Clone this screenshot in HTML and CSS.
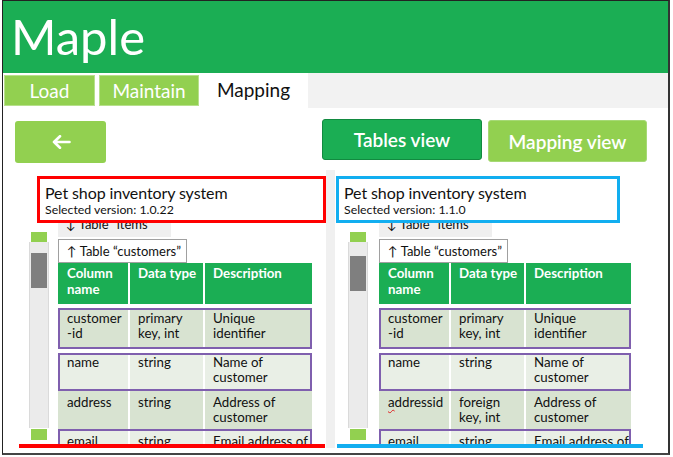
FILE: index.html
```html
<!DOCTYPE html>
<html lang="en">
<head>
<meta charset="utf-8">
<title>Maple</title>
<link rel="stylesheet" href="styles.css">
</head>
<body>
<div class="frame">
  <header class="header"><h1 class="logo">Maple</h1></header>
  <nav class="tabbar">
    <div class="tabgroup">
      <div class="tab tab-green tab-load">Load</div>
      <div class="tab tab-green tab-maintain">Maintain</div>
      <div class="tab tab-active">Mapping</div>
    </div>
  </nav>
  <main class="content">
    <div class="toolbar">
      <button class="btn btn-back" aria-label="Back">
        <svg width="20" height="14" viewBox="0 0 20 14"><path d="M18.5 7H3M9 1.2L3 7l6 5.8" fill="none" stroke="#fff" stroke-width="2.6" stroke-linecap="round" stroke-linejoin="round"/></svg>
      </button>
      <button class="btn btn-tables">Tables view</button>
      <button class="btn btn-mapping">Mapping view</button>
    </div>
    <div class="panels">
      <section class="panel panel-left">
        <div class="title-box title-red">
          <div class="title">Pet shop inventory system</div>
          <div class="version">Selected version: 1.0.22</div>
        </div>
        <div class="body">
          <div class="scrollbar">
            <div class="sb-btn"></div>
            <div class="sb-track"><div class="sb-thumb"></div></div>
            <div class="sb-btn sb-down"></div>
          </div>
          <div class="viewport">
            <div class="scrolled">
              <div class="tbl-label tbl-items">↓ Table “items”</div>
              <div class="tbl-label tbl-current">↑ Table “customers”</div>
              <div class="grid grid-left head">
                <div class="cell">Column<br>name</div>
                <div class="cell">Data type</div>
                <div class="cell">Description</div>
              </div>
              <div class="grid grid-left row dark sel r1">
                <div class="cell">customer<br>-id</div>
                <div class="cell">primary<br>key, int</div>
                <div class="cell">Unique<br>identifier</div>
              </div>
              <div class="grid grid-left row light sel r2">
                <div class="cell">name</div>
                <div class="cell">string</div>
                <div class="cell">Name of<br>customer</div>
              </div>
              <div class="grid grid-left row dark r3">
                <div class="cell">address</div>
                <div class="cell">string</div>
                <div class="cell">Address of<br>customer</div>
              </div>
              <div class="grid grid-left row light sel r4">
                <div class="cell">email</div>
                <div class="cell">string</div>
                <div class="cell nowrap">Email address of</div>
              </div>
            </div>
          </div>
        </div>
        <div class="bottom-line line-red"></div>
      </section>
      <div class="divider"></div>
      <section class="panel panel-right">
        <div class="title-box title-blue">
          <div class="title">Pet shop inventory system</div>
          <div class="version">Selected version: 1.1.0</div>
        </div>
        <div class="body">
          <div class="scrollbar">
            <div class="sb-btn"></div>
            <div class="sb-track"><div class="sb-thumb thumb-right"></div></div>
            <div class="sb-btn sb-down"></div>
          </div>
          <div class="viewport">
            <div class="scrolled">
              <div class="tbl-label tbl-items">↓ Table “items”</div>
              <div class="tbl-label tbl-current">↑ Table “customers”</div>
              <div class="grid grid-right head">
                <div class="cell">Column<br>name</div>
                <div class="cell">Data type</div>
                <div class="cell">Description</div>
              </div>
              <div class="grid grid-right row dark sel r1">
                <div class="cell">customer<br>-id</div>
                <div class="cell">primary<br>key, int</div>
                <div class="cell">Unique<br>identifier</div>
              </div>
              <div class="grid grid-right row light sel r2">
                <div class="cell">name</div>
                <div class="cell">string</div>
                <div class="cell">Name of<br>customer</div>
              </div>
              <div class="grid grid-right row dark r3">
                <div class="cell"><span class="typo">a</span>ddressid</div>
                <div class="cell">foreign<br>key, int</div>
                <div class="cell">Address of<br>customer</div>
              </div>
              <div class="grid grid-right row light sel r4">
                <div class="cell">email</div>
                <div class="cell">string</div>
                <div class="cell nowrap">Email address of</div>
              </div>
            </div>
          </div>
        </div>
        <div class="bottom-line line-blue"></div>
      </section>
    </div>
  </main>
</div>
</body>
</html>
```
FILE: styles.css
```css
* { box-sizing: border-box; }
html, body { margin: 0; padding: 0; background: #fff; }
body { font-family: "Lato", "DejaVu Sans", sans-serif; color: #111; }

.frame {
  margin-left: 2px;
  width: 668px;
  height: 455px;
  border: 1px solid #222;
  border-right: 2px solid #333;
  border-bottom: 2px solid #444;
  overflow: hidden;
  background: #fff;
}

.header { height: 72px; background: #1bae54; }
.logo {
  margin: 0;
  padding-left: 8px;
  font-size: 49px;
  font-weight: 400;
  line-height: 71px;
  color: #fff;
}

.tabbar { height: 35px; background: #f2f2f2; display: flex; }
.tabgroup {
  width: 305px;
  background: #fff;
  display: flex;
  padding: 2px 0 2px 1px;
}
.tab {
  height: 31px;
  line-height: 29px;
  font-size: 19px;
  text-align: center;
}
.tab-green { background: #92d050; color: #fff; border: 1px solid #b7e08c; }
.tab-load { width: 91px; }
.tab-maintain { width: 100px; margin-left: 4px; }
.tab-active { flex: 1; color: #111; }

.toolbar {
  height: 55px;
  padding: 11px 0 0 12px;
  display: flex;
  align-items: flex-start;
}
.btn {
  border: none;
  margin: 0;
  padding: 0;
  font-family: inherit;
  color: #fff;
  font-size: 19px;
  font-weight: 600;
  border-radius: 3px;
  display: flex;
  align-items: center;
  justify-content: center;
}
.btn-back { width: 91px; height: 42px; margin-top: 2px; background: #92d050; }
.btn-tables {
  width: 160px; height: 41px; margin-left: 216px;
  background: #1bae54; border: 1px solid #128a40;
}
.btn-mapping {
  width: 159px; height: 42px; margin-left: 6px; margin-top: 1px;
  background: #92d050; border: 1px solid #a6d975;
}

.panels {
  margin-top: 7px;
  margin-left: 15px;
  display: flex;
  height: 278px;
}
.divider { width: 9px; background: #f0f0f0; }
.panel { display: flex; flex-direction: column; padding-top: 6px; }
.panel-left { width: 308px; }
.panel-right { width: 310px; }

.title-box {
  height: 47px;
  border: 3px solid;
  padding: 4px 0 0 5px;
  background: #fff;
  position: relative;
  z-index: 1;
}
.title-red { border-color: #ff0000; margin-left: 19px; width: 289px; }
.title-blue { border-color: #12aef0; margin-left: 1px; width: 284px; }
.title { font-size: 16px; line-height: 19px; letter-spacing: -0.1px; }
.version { font-size: 12.3px; line-height: 16px; }

.body { height: 221px; display: flex; }
.panel-left .scrollbar { margin-left: 11px; }
.panel-right .scrollbar { margin-left: 13px; }
.scrollbar {
  width: 20px;
  padding-top: 9px;
  padding-bottom: 4px;
  display: flex;
  flex-direction: column;
}
.sb-btn { height: 10px; margin: 0 2px; background: #92d050; }
.sb-down { height: 11px; margin-top: 1px; }
.sb-track {
  flex: 1;
  background: #ebebeb;
  border-left: 1px solid #dadada;
  border-right: 1px solid #dadada;
  padding-top: 11px;
}
.sb-thumb { height: 35px; margin: 0 1px; background: #7f7f7f; }
.thumb-right { margin-top: 3px; }

.viewport { overflow: hidden; }
.panel-left .viewport { margin-left: 9px; width: 255px; }
.panel-right .viewport { margin-left: 11px; width: 253px; }
.scrolled { margin-top: -10px; }

.tbl-label {
  height: 24px;
  font-size: 13px;
  line-height: 22px;
  padding-left: 8px;
}
.tbl-items { background: #efefef; width: 113px; }
.tbl-current {
  margin-top: 2px;
  border: 1px solid #a0a0a0;
  background: #fff;
  width: 129px;
}

.grid { display: grid; column-gap: 2px; background: #fff; }
.grid-left { grid-template-columns: 70px 73px 107px; width: 254px; }
.grid-right { grid-template-columns: 70px 73px 105px; width: 252px; }

.cell {
  font-size: 13.3px;
  line-height: 15.5px;
  padding: 2px 0 0 8px;
  overflow: hidden;
}
.cell:first-child { padding-left: 9px; }
.nowrap { white-space: nowrap; }

.head { height: 41px; }
.head .cell { background: #1bae54; color: #fff; font-weight: 700; padding-top: 3px; }

.row.sel { outline: 2px solid #7f5fae; outline-offset: -2px; }
.dark .cell { background: #d8e3d1; }
.light .cell { background: #e9efe6; }
.r1 { height: 41px; margin-top: 4px; }
.r1 .cell { padding-top: 2.5px; }
.r2 { height: 38px; margin-top: 4px; }
.r2 .cell { padding-top: 1.5px; }
.r3 { height: 38px; }
.r3 .cell { padding-top: 3.5px; }
.r4 { height: 38px; }
.r4 .cell { padding-top: 5px; }

.typo { text-decoration: underline wavy #e02020 1px; text-underline-offset: 2px; }

.bottom-line { height: 4px; width: 306px; }
.line-red { background: #ff0000; margin-left: 1px; }
.line-blue { background: #12aef0; margin-left: 2px; }
```
